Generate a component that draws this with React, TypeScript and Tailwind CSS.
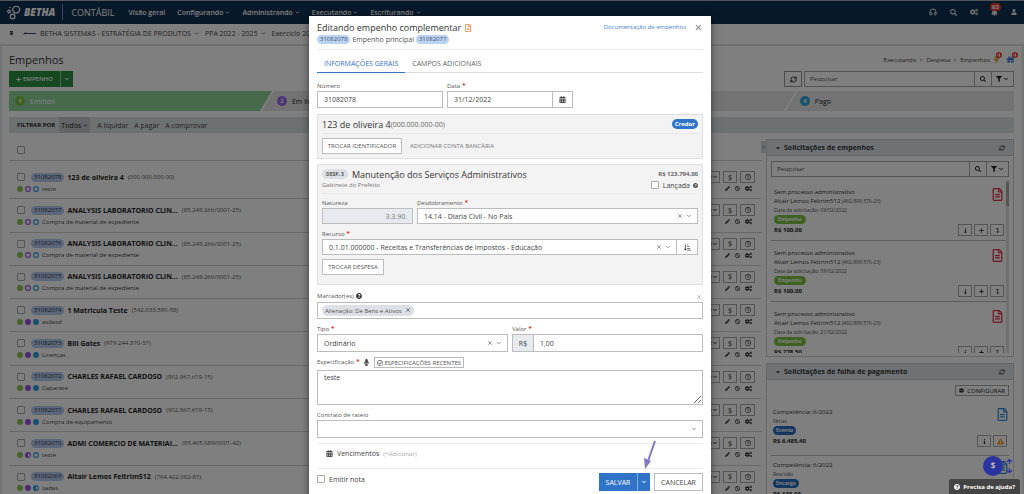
import React from 'react';
import {
  FaBan,
  FaBell,
  FaCalendarAlt,
  FaCog,
  FaCogs,
  FaExclamationTriangle,
  FaFilter,
  FaGift,
  FaInfo,
  FaLevelDownAlt,
  FaLightbulb,
  FaMicrophone,
  FaPencilAlt,
  FaPlus,
  FaQuestionCircle,
  FaRegCheckCircle,
  FaRegClock,
  FaRegFileAlt,
  FaSearch,
  FaSortAmountDownAlt,
  FaCaretDown,
  FaThumbtack,
  FaUser,
} from 'react-icons/fa';
import { ArrowDown, ArrowUp, ChevronDown, ChevronRight, Headphones, RefreshCw, X } from 'lucide-react';

type Fill = 'full' | 'half' | 'empty';

interface Empenho {
  id: string;
  name: string;
  doc: string;
  description: string;
  status: [Fill, Fill, Fill];
}

const empenhos: Empenho[] = [
  { id: '31082078', name: '123 de oliveira 4', doc: '(000.000.000-00)', description: 'teste', status: ['full', 'empty', 'empty'] },
  { id: '31082077', name: 'ANALYSIS LABORATORIO CLIN...', doc: '(85.249.266/0001-25)', description: 'Compra de material de expediente', status: ['full', 'empty', 'empty'] },
  { id: '31082076', name: 'ANALYSIS LABORATORIO CLIN...', doc: '(85.249.266/0001-25)', description: 'Compra de material de expediente', status: ['full', 'empty', 'empty'] },
  { id: '31082075', name: 'ANALYSIS LABORATORIO CLIN...', doc: '(85.249.266/0001-25)', description: 'Compra de material de expediente', status: ['full', 'empty', 'empty'] },
  { id: '31082074', name: '1 Matricula Teste', doc: '(542.033.590-58)', description: 'asdasd', status: ['full', 'full', 'full'] },
  { id: '31082073', name: 'Bill Gates', doc: '(979.244.370-37)', description: 'Licenças', status: ['full', 'full', 'full'] },
  { id: '31082072', name: 'CHARLES RAFAEL CARDOSO', doc: '(902.967.619-15)', description: 'Capacete', status: ['full', 'full', 'full'] },
  { id: '31082071', name: 'CHARLES RAFAEL CARDOSO', doc: '(902.967.619-15)', description: 'Compra de equipamento', status: ['full', 'full', 'full'] },
  { id: '31082070', name: 'ADMI COMERCIO DE MATERIAI...', doc: '(93.465.089/0001-42)', description: 'teste', status: ['full', 'half', 'empty'] },
  { id: '31082069', name: 'Altair Lemos Feltrim512', doc: '(764.422.082-81)', description: 'sadas', status: ['full', 'full', 'half'] },
];

const solicitacoes = [
  { date: '09/02/2022', value: 'R$ 100,00' },
  { date: '09/02/2022', value: 'R$ 100,00' },
  { date: '21/02/2022', value: 'R$ 278,50' },
];

const folhas = [
  { kind: 'Férias', tag: 'Evento', value: 'R$ 6.485,40' },
  { kind: 'Rescisão', tag: 'Encargo', value: 'R$ 136,66' },
];

const statusColors = ['text-[#8cc653]', 'text-[#9b51e0]', 'text-[#2d9cdb]'];

const StatusDot: React.FC<{ fill: Fill; color: string }> = ({ fill, color }) => (
  <svg viewBox="0 0 12 12" className={`size-[6px] ${color}`}>
    <circle cx="6" cy="6" r="4.8" fill={fill === 'full' ? 'currentColor' : 'none'} stroke="currentColor" strokeWidth="2.2" />
    {fill === 'half' && <path d="M6 1a5 5 0 0 0 0 10z" fill="currentColor" />}
  </svg>
);

const Check: React.FC<{ label?: string; id: string }> = ({ label, id }) => (
  <input
    type="checkbox"
    id={id}
    aria-label={label}
    className="size-2 shrink-0 appearance-none rounded-[1px] border border-[#aaa] bg-white"
  />
);

const Logo: React.FC = () => (
  <svg viewBox="0 0 42 44" className="h-[15px] w-[14px]" fill="none" stroke="#fff" strokeWidth="3.6">
    <path d="M22 4h11l6 9-6 10H22l-6-10z" strokeLinejoin="round" />
    <circle cx="6" cy="19" r="4" />
    <circle cx="9" cy="7" r="1.4" strokeWidth="2.4" />
    <circle cx="17" cy="34" r="7" />
  </svg>
);

const TopBar: React.FC = () => {
  const menus = ['Configurando', 'Administrando', 'Executando', 'Escriturando'];

  return (
    <header className="flex h-6 items-center border-t border-white/60 bg-[#0f3052] px-[7px] pb-px text-white">
      <Logo />
      <span className="ml-[3px] text-[10px] font-extrabold italic">BETHA</span>
      <span className="ml-[7px] h-4 w-px bg-[#8d78d8]" />
      <span className="ml-2 text-[9px]">CONTÁBIL</span>
      <nav className="ml-[14px] flex items-center gap-3 text-[7px] font-semibold">
        <a href="#visao">Visão geral</a>
        {menus.map((menu) => (
          <a key={menu} href={`#${menu}`} className="flex items-center gap-[2px]">
            {menu}
            <ChevronDown size={5} strokeWidth={4} />
          </a>
        ))}
      </nav>
      <div className="ml-auto flex items-center gap-[13px] text-[#e6e6e6]">
        <button aria-label="Suporte"><Headphones size={8} strokeWidth={3} /></button>
        <button aria-label="Buscar"><FaSearch size={7} /></button>
        <button aria-label="Configurações"><FaCogs size={8} /></button>
        <button aria-label="Notificações" className="relative">
          <FaBell size={7} />
          <span className="absolute -top-[6px] -left-px rounded-full bg-[#e23b34] px-[2px] text-[6px] leading-[8px] font-bold text-white">63</span>
        </button>
        <button aria-label="Usuário"><FaUser size={6} /></button>
      </div>
    </header>
  );
};

const ContextBar: React.FC = () => (
  <div className="flex h-[22px] items-center border-b-2 border-[#dcdfe1] bg-white px-[9px] pb-px text-[7px] text-[#444]">
    <FaThumbtack size={5} />
    <svg viewBox="0 0 40 8" className="mr-[4px] ml-[9px] h-[3px] w-[13px]">
      <path d="M0 6L6 1H12L8 6Z" fill="#444" />
      <path d="M10 4H40" stroke="#2c3c7c" strokeWidth="3" />
    </svg>
    <button className="flex items-center gap-[3px]">BETHA SISTEMAS - ESTRATÉGIA DE PRODUTOS <ChevronDown size={5} strokeWidth={3} /></button>
    <button className="ml-[6px] flex items-center gap-[3px]">PPA 2022 - 2025 <ChevronDown size={5} strokeWidth={3} /></button>
    <button className="ml-[6px] flex items-center gap-[3px]">Exercício 2022 <ChevronDown size={5} strokeWidth={3} /></button>
  </div>
);

const SearchBox: React.FC<{ id: string; className: string }> = ({ id, className }) => (
  <div className={`flex h-4 border border-[#aaa] bg-white text-[#222] ${className}`}>
    <input id={id} aria-label="Pesquisar" placeholder="Pesquisar" className="min-w-0 flex-1 px-[5px] text-[6px] placeholder:text-[#555]" />
    <button aria-label="Buscar" className="flex w-[17px] items-center justify-center border-l border-[#aaa]"><FaSearch size={6} /></button>
    <button aria-label="Filtrar" className="flex w-[22px] items-center justify-center gap-px border-l border-[#aaa]">
      <FaFilter size={6} />
      <ChevronDown size={6} strokeWidth={4} />
    </button>
  </div>
);

const stageClip = '[clip-path:polygon(12px_0,100%_0,calc(100%-12px)_100%,0_100%)]';

const stages = [
  { n: 1, label: 'Emitido', box: 'grow-6 bg-[#8fd49a] pl-[6px] text-white [clip-path:polygon(0_0,100%_0,calc(100%-12px)_100%,0_100%)]', dot: 'bg-[#7cc142]' },
  { n: 2, label: 'Em liquidação', box: `-ml-[10px] grow-6 bg-[#e6e6e6] pl-[15px] ${stageClip}`, dot: 'bg-[#9b6be8]' },
  { n: 3, label: 'Liquidado', box: `-ml-[10px] grow-6 bg-[#e6e6e6] pl-[15px] ${stageClip}`, dot: 'bg-[#e8a33b]' },
  { n: 4, label: 'Pago', box: '-ml-[10px] grow-5 bg-[#e6e6e6] pl-[14px] [clip-path:polygon(12px_0,100%_0,100%_100%,0_100%)]', dot: 'bg-[#2fa4dc]' },
];

const PageHeader: React.FC = () => (
  <>
    <div className="flex h-[25px] items-center justify-between pt-[2px]">
      <h1 className="text-[11px] text-[#333]">Empenhos</h1>
      <div className="flex items-center gap-[3px] text-[6px] text-[#444]">
        <span>Executando</span>
        <ChevronRight size={4} strokeWidth={4} />
        <span>Despesa</span>
        <ChevronRight size={4} strokeWidth={4} />
        <span>Empenhos</span>
        <span className="relative text-[#e5a93a]">
          <FaLightbulb size={7} />
          <span className="absolute -top-1 left-[3px] size-[6px] rounded-full bg-[#e23b34] text-center text-[5px] leading-[6px] font-bold text-white">4</span>
        </span>
        <span className="relative ml-1 text-[#2a6fd0]">
          <FaGift size={7} />
          <span className="absolute -top-1 left-[5px] size-[6px] rounded-full bg-[#e23b34] text-center text-[5px] leading-[6px] font-bold text-white">4</span>
        </span>
      </div>
    </div>
    <div className="flex items-center justify-between">
      <div className="flex h-4 bg-[#2c9145] text-[6px] font-semibold text-white">
        <button className="flex items-center gap-[2px] px-[7px]"><FaPlus size={5} /> EMPENHO</button>
        <button aria-label="Mais opções" className="flex w-[13px] items-center justify-center border-l border-white/50"><ChevronDown size={6} strokeWidth={4} /></button>
      </div>
      <div className="flex gap-[2px]">
        <button aria-label="Atualizar" className="flex h-4 w-[18px] items-center justify-center border border-[#999] text-[#222]"><RefreshCw size={7} strokeWidth={3} /></button>
        <SearchBox id="busca" className="w-[210px]" />
      </div>
    </div>
    <ol className="mt-1 flex h-5 text-[7px] text-[#222]">
      {stages.map((stage) => (
        <li key={stage.n} className={`flex basis-0 items-center gap-[5px] ${stage.box}`}>
          <span className={`size-[10px] rounded-full text-center text-[6px] leading-[10px] font-bold text-white ${stage.dot}`}>{stage.n}</span>
          {stage.label}
        </li>
      ))}
    </ol>
    <div className="mt-[6px] flex h-4 items-center bg-[#dde2e5] pl-2 text-[7px] text-[#444]">
      <span className="text-[6px] font-bold text-[#222]">FILTRAR POR</span>
      <button className="ml-1 flex h-4 items-center gap-[2px] bg-[#c4c9cc] px-[2px] text-[#222]">Todos <ChevronDown size={5} strokeWidth={4} /></button>
      <a href="#liquidar" className="ml-[7px]">A liquidar</a>
      <a href="#pagar" className="ml-[6px]">A pagar</a>
      <a href="#comprovar" className="ml-[6px]">A comprovar</a>
    </div>
  </>
);

const rowButton = 'flex h-3 items-center justify-center border border-[#aaa]';

const EmpenhoRow: React.FC<{ item: Empenho }> = ({ item }) => (
  <li className="flex items-start justify-between border-b border-[#d0d0d0] pt-[5px] pr-[6px] pl-2">
    <div>
      <div className="flex h-3 items-center">
        <Check id={`row-${item.id}`} label={item.id} />
        <span className="ml-[6px] rounded-full bg-[#b7cdf1] px-[3px] text-[6px] leading-[9px] text-[#335]">{item.id}</span>
        <strong className="ml-[3px] text-[7px] font-bold text-[#222]">{item.name}</strong>
        <span className="ml-[4px] text-[6px] text-[#555]">{item.doc}</span>
      </div>
      <div className="flex h-[11px] items-center gap-[2px]">
        {item.status.map((fill, i) => (
          <StatusDot key={i} fill={fill} color={statusColors[i]} />
        ))}
        <span className="ml-px text-[6px] text-[#444]">{item.description}</span>
      </div>
    </div>
    <div className="flex flex-col items-end text-[#333]">
      <div className="flex gap-[3px] text-[7px]">
        <button className="flex h-3 items-center border border-[#aaa] px-px text-[6px]">LIQUIDAR <ChevronDown size={6} strokeWidth={4} /></button>
        <button className={`w-[14px] ${rowButton}`}>$</button>
        <button aria-label="Histórico" className={`w-[15px] ${rowButton}`}><FaRegClock size={6} /></button>
      </div>
      <div className="flex h-[11px] items-center gap-[5px] pr-[3px]">
        <button aria-label="Editar"><FaPencilAlt size={5} /></button>
        <button aria-label="Anular"><FaBan size={5} /></button>
        <button aria-label="Opções"><FaCogs size={7} /></button>
      </div>
    </div>
  </li>
);

const miniButton = 'flex h-3 w-[14px] items-center justify-center border border-[#aaa] text-[#333]';

const SidePanel: React.FC<{ title: string; children: React.ReactNode; className: string }> = ({ title, children, className }) => (
  <section className={`border border-[#ccc] bg-white ${className}`}>
    <div className="flex h-4 items-center border-b border-[#ccc] bg-[#dfe4ea] px-2">
      <FaCaretDown size={6} className="text-[#333]" />
      <h2 className="ml-[3px] text-[7px] font-bold text-[#333]">{title}</h2>
      <button aria-label="Atualizar" className="ml-auto text-[#333]"><RefreshCw size={6} strokeWidth={3} /></button>
    </div>
    {children}
  </section>
);

const Sidebar: React.FC = () => (
  <aside className="flex w-[248px] shrink-0 flex-col gap-[6px]">
    <SidePanel title="Solicitações de empenhos" className="h-[218px] overflow-hidden">
      <SearchBox id="busca-solicitacao" className="mx-1 mt-[5px]" />
      <div className="mt-[3px] flex h-[173px] overflow-hidden pl-1">
        <ul className="flex-1">
          {solicitacoes.map((s, i) => (
            <li key={i} className="h-[61px] border-b border-[#bbb] pt-2 pr-[2px] pl-[3px] text-[6px] leading-[9px] text-[#333]">
              <div className="flex items-start justify-between">
                <div>
                  <p>Sem processo administrativo</p>
                  <p>Altair Lemos Feltrim512 <span className="text-[5px] text-[#555]">(462.899.570-23)</span></p>
                  <p className="text-[5px] text-[#555]">Data da solicitação: {s.date}</p>
                </div>
                <FaRegFileAlt size={13} className="text-[#d8324a]" />
              </div>
              <span className="block w-fit rounded-full bg-[#7cc142] px-[4px] text-[5px] leading-[9px] font-bold text-white">Empenho</span>
              <div className="flex items-center justify-between">
                <strong className="text-[#222]">{s.value}</strong>
                <div className="flex gap-[2px]">
                  <button aria-label="Detalhes" className={miniButton}><FaInfo size={5} /></button>
                  <button aria-label="Adicionar" className={miniButton}><FaPlus size={5} /></button>
                  <button aria-label="Baixar" className={miniButton}><FaLevelDownAlt size={5} /></button>
                </div>
              </div>
            </li>
          ))}
        </ul>
        <div className="mr-1 w-[3px] bg-[#e0e0e0]"><div className="mt-[2px] h-6 bg-[#aaa]" /></div>
      </div>
    </SidePanel>
    <SidePanel title="Solicitações de folha de pagamento" className="flex-1">
      <div className="flex justify-end px-1 pt-[5px]">
        <button className="flex h-[11px] items-center gap-[3px] border border-[#aaa] px-[3px] text-[6px] text-[#222]"><FaCog size={5} /> CONFIGURAR</button>
      </div>
      <ul className="mx-1 mt-[7px]">
        {folhas.map((f) => (
          <li key={f.tag} className="h-[53px] border-b border-[#bbb] pt-[5px] pl-[2px] text-[6px] leading-[9px] text-[#333]">
            <div className="flex items-start justify-between">
              <div>
                <p>Competência: 6/2022</p>
                <p className="text-[5px] text-[#555]">{f.kind}</p>
              </div>
              <FaRegFileAlt size={13} className="text-[#2d8fd8]" />
            </div>
            <span className="block w-fit rounded-full bg-[#2a6fbf] px-[3px] text-[5px] leading-[9px] font-bold text-white">{f.tag}</span>
            <div className="flex items-center justify-between pr-[2px]">
              <strong className="text-[#222]">{f.value}</strong>
              <div className="flex gap-[2px]">
                <button aria-label="Detalhes" className={miniButton}><FaInfo size={5} /></button>
                <button aria-label="Alertas" className={miniButton}><FaExclamationTriangle size={7} color="#f0a020" /></button>
              </div>
            </div>
          </li>
        ))}
      </ul>
    </SidePanel>
  </aside>
);

const Label: React.FC<{ htmlFor: string; required?: boolean; children: React.ReactNode }> = ({ htmlFor, required, children }) => (
  <label htmlFor={htmlFor} className="flex h-[9px] gap-[2px] text-[6px] leading-[9px] font-medium text-[#555]">
    {children}
    {required && <span className="leading-[6px] font-bold text-[#e02020]">*</span>}
  </label>
);

const field = 'border border-[#bdbdbd] bg-white text-[7px] text-[#444]';

const SelectField: React.FC<{ id: string; value: string; clearable?: boolean; className: string }> = ({ id, value, clearable = true, className }) => (
  <div className={`flex items-center pr-[5px] ${field} ${className}`}>
    <select id={id} className="h-full min-w-0 flex-1 appearance-none px-[6px]" defaultValue={value}>
      <option>{value}</option>
    </select>
    {clearable && <button aria-label="Limpar" className="mr-[3px] text-[#777]"><X size={6} strokeWidth={3} /></button>}
    <ChevronDown size={6} strokeWidth={3} className="text-[#777]" />
  </div>
);

const outlineButton = 'h-4 border border-[#bdbdbd] bg-white text-[#555]';

const IdBadge: React.FC<{ children: string }> = ({ children }) => (
  <span className="rounded-full bg-[#bcd2f5] px-[3px] text-[6px] leading-[9px] text-[#456]">{children}</span>
);

const EditDialog: React.FC = () => (
  <div role="dialog" aria-label="Editando empenho complementar" className="relative w-full max-w-[402px] bg-white px-2 pt-[6px] pb-4 shadow-[0_2px_8px_rgba(0,0,0,0.5)]">
    <div className="flex items-start justify-between border-b border-[#ececec] pb-[5px]">
      <div>
        <h2 className="flex items-center gap-[3px] text-[9px] leading-[12px] text-[#333]">
          Editando empenho complementar
          <FaRegFileAlt size={8} className="text-[#f08a3c]" />
        </h2>
        <p className="flex h-[10px] items-center gap-[2px] text-[7px] text-[#555]">
          <IdBadge>31082078</IdBadge> Empenho principal <IdBadge>31082077</IdBadge>
        </p>
      </div>
      <div className="flex items-center gap-2 pt-[1px]">
        <a href="#documentacao" className="text-[6px] leading-[9px] text-[#3f80d0]">Documentação de empenhos</a>
        <button aria-label="Fechar" className="text-[#999]"><X size={9} strokeWidth={3} /></button>
      </div>
    </div>

    <div role="tablist" className="mt-1 flex h-[19px] border-b border-[#ddd] text-[7px]">
      <button role="tab" aria-selected="true" className="-mb-px border-b border-[#2f74c8] px-[7px] font-medium text-[#2f74c8]">INFORMAÇÕES GERAIS</button>
      <button role="tab" aria-selected="false" className="px-[7px] text-[#666]">CAMPOS ADICIONAIS</button>
    </div>

    <div className="mt-[9px] flex gap-1">
      <div className="w-[126px]">
        <Label htmlFor="numero">Número</Label>
        <input id="numero" defaultValue="31082078" className={`block h-[17px] w-full px-[6px] ${field}`} />
      </div>
      <div className="w-[126px]">
        <Label htmlFor="data" required>Data</Label>
        <div className="flex">
          <input id="data" defaultValue="31/12/2022" className={`h-[17px] min-w-0 flex-1 px-[6px] ${field}`} />
          <button aria-label="Abrir calendário" className="flex h-[17px] w-5 items-center justify-center border border-l-0 border-[#bdbdbd] text-[#444]"><FaCalendarAlt size={7} /></button>
        </div>
      </div>
    </div>

    <section className="mt-[6px] border border-[#e0e0e0] bg-[#f3f3f3] px-1 pb-1">
      <div className="flex h-[19px] items-center border-b border-[#e9e9e9]">
        <h3 className="text-[9px] text-[#333]">123 de oliveira 4</h3>
        <span className="text-[7px] text-[#666]">(000.000.000-00)</span>
        <span className="ml-auto rounded-full bg-[#2f74c8] px-[3px] text-[6px] leading-[10px] font-bold text-white">Credor</span>
      </div>
      <div className="mt-1 flex items-center text-[6px]">
        <button className={`w-20 ${outlineButton}`}>TROCAR IDENTIFICADOR</button>
        <button className="ml-[8px] text-[#777]">ADICIONAR CONTA BANCÁRIA</button>
      </div>
    </section>

    <section className="mt-[5px] border border-[#e0e0e0] bg-[#f3f3f3] px-1 pt-[3px] pb-[9px]">
      <div className="flex justify-between border-b border-[#e9e9e9] pb-[3px]">
        <div>
          <h3 className="flex h-3 items-center gap-1 text-[9px] text-[#333]">
            <span className="rounded-full bg-[#dcdfe3] px-[4px] text-[5px] leading-[10px] font-bold text-[#555]">DESP. 3</span>
            Manutenção dos Serviços Administrativos
          </h3>
          <p className="text-[6px] leading-[10px] text-[#777]">Gabinete do Prefeito</p>
        </div>
        <div className="flex flex-col items-end">
          <strong className="text-[6px] leading-[12px] font-bold text-[#666]">R$ 123.794,00</strong>
          <div className="flex h-[10px] items-center text-[7px] text-[#444]">
            <Check id="lancada" />
            <label htmlFor="lancada" className="mr-[3px] ml-[4px]">Lançada</label>
            <FaQuestionCircle size={5} />
          </div>
        </div>
      </div>
      <div className="mt-[5px] flex gap-1">
        <div className="w-[91px]">
          <Label htmlFor="natureza">Natureza</Label>
          <input id="natureza" defaultValue="3.3.90." disabled className="block h-4 w-full border border-[#bdbdbd] bg-[#e7eaee] px-[5px] text-right text-[7px] text-[#777]" />
        </div>
        <div className="flex-1">
          <Label htmlFor="desdobramento" required>Desdobramento</Label>
          <SelectField id="desdobramento" value="14.14 - Díaria Civil - No País" className="h-4" />
        </div>
      </div>
      <div className="mt-[6px]">
        <Label htmlFor="recurso" required>Recurso</Label>
        <div className="flex">
          <SelectField id="recurso" value="0.1.01.000000 - Receitas e Transferências de Impostos - Educação" className="h-4 flex-1" />
          <button aria-label="Ordenar" className="flex h-4 w-[21px] items-center justify-center border border-l-0 border-[#bdbdbd] bg-white text-[#444]"><FaSortAmountDownAlt size={7} /></button>
        </div>
      </div>
      <button className={`mt-1 block w-[62px] text-[6px] ${outlineButton}`}>TROCAR DESPESA</button>
    </section>

    <div className="mt-[7px]">
      <div className="flex items-center justify-between pr-px">
        <Label htmlFor="marcadores">Marcador(es) <FaQuestionCircle size={6} className="mt-px text-[#333]" /></Label>
        <button aria-label="Limpar marcadores" className="text-[#aaa]"><X size={6} strokeWidth={3} /></button>
      </div>
      <div className={`mt-px flex h-[17px] items-center px-1 ${field}`}>
        <span className="flex h-[11px] items-center gap-[3px] rounded-full bg-[#dde0e4] px-[3px] text-[6px] text-[#555]">
          Alienação: De Bens e Ativos
          <button aria-label="Remover marcador" className="-mt-[2px]"><X size={6} strokeWidth={3} /></button>
        </span>
        <input id="marcadores" className="min-w-0 flex-1" />
      </div>
    </div>

    <div className="mt-[6px] flex gap-1">
      <div className="flex-1">
        <Label htmlFor="tipo" required>Tipo</Label>
        <SelectField id="tipo" value="Ordinário" className="h-[18px]" />
      </div>
      <div className="flex-1">
        <Label htmlFor="valor" required>Valor</Label>
        <div className="flex">
          <span className="flex h-[18px] w-[21px] items-center justify-center border border-r-0 border-[#bdbdbd] bg-[#e7eaee] text-[7px] text-[#444]">R$</span>
          <input id="valor" defaultValue="1,00" className={`h-[18px] min-w-0 flex-1 px-[6px] ${field}`} />
        </div>
      </div>
    </div>

    <div className="mt-[5px] flex h-[11px] items-center gap-1 text-[#444]">
      <Label htmlFor="especificacao" required>Especificação</Label>
      <button aria-label="Ditar"><FaMicrophone size={7} /></button>
      <button className="flex h-[11px] items-center gap-px border border-[#bbb] px-[2px] text-[6px] text-[#555]"><FaRegCheckCircle size={6} /> ESPECIFICAÇÕES RECENTES</button>
    </div>
    <textarea id="especificacao" defaultValue="teste" className={`mt-[2px] block h-[35px] w-full px-[6px] py-[3px] ${field}`} />

    <div className="mt-[6px]">
      <Label htmlFor="rateio">Contrato de rateio</Label>
      <SelectField id="rateio" value="" clearable={false} className="h-[18px]" />
    </div>

    <div className="mt-[5px] flex h-[26px] items-center border-y border-[#ececec] pb-[5px] pl-[9px] text-[#444]">
      <FaCalendarAlt size={7} />
      <span className="ml-1 text-[7px]">Vencimentos</span>
      <button className="ml-1 text-[6px] text-[#aaa]">(+Adicionar)</button>
    </div>

    <div className="mt-1 flex items-start justify-between text-[7px]">
      <div className="flex h-3 items-center gap-1 text-[#444]">
        <Check id="emitir" />
        <label htmlFor="emitir">Emitir nota</label>
      </div>
      <div className="flex">
        <button className="h-[18px] w-[38px] bg-[#2f74c8] text-white">SALVAR</button>
        <button aria-label="Mais opções de salvar" className="flex h-[18px] w-[13px] items-center justify-center border-l border-[#7fabdf] bg-[#2f74c8] text-white"><ChevronDown size={6} strokeWidth={4} /></button>
        <button className="ml-1 h-[18px] w-[49px] border border-[#bdbdbd] text-[#444]">CANCELAR</button>
      </div>
    </div>

    {/* pointer to the save options */}
    <svg viewBox="0 0 12 30" className="absolute right-[55px] bottom-[37px] h-[30px] w-3">
      <path d="M11 1L4 21" stroke="#8478c4" strokeWidth="2" fill="none" />
      <path d="M1 29L0 18L7 21Z" fill="#8478c4" />
    </svg>
  </div>
);

export default function App() {
  return (
    <div className="relative h-screen overflow-hidden bg-[#e4e7e9] font-['Open_Sans','Noto_Sans',sans-serif] leading-none">
      <TopBar />
      <ContextBar />
      <main className="mr-[2px] ml-[2px] bg-white pr-2 pl-[7px]">
        <PageHeader />
        <div className="mt-[6px] flex">
          <div className="min-w-0 flex-1">
            <div className="flex h-[22px] items-center border-b border-[#d0d0d0] pl-2">
              <Check id="todos" label="Selecionar todos" />
            </div>
            <ul className="grid h-[338px] auto-rows-fr pt-[5px]">
              {empenhos.map((item) => (
                <EmpenhoRow key={item.id} item={item} />
              ))}
            </ul>
          </div>
          <button aria-label="Recolher painel" className="mt-[2px] flex h-3 w-[5px] items-center justify-center bg-[#d5dade] text-[#444]"><ChevronRight size={5} strokeWidth={3} /></button>
          <Sidebar />
        </div>
      </main>

      <div className="absolute inset-0 flex items-start justify-center overflow-hidden bg-black/50 pt-4 pr-1">
        <EditDialog />
      </div>

      <div className="absolute right-[11px] bottom-[18px] flex items-center gap-[3px] text-[#2a34a0]">
        <button aria-label="Financeiro" className="size-5 rounded-full bg-[#2a34a0] text-[8px] font-bold text-[#bbb]">$</button>
        <span className="flex flex-col gap-[2px]">
          <ArrowUp size={7} strokeWidth={4} />
          <ArrowDown size={7} strokeWidth={4} />
        </span>
      </div>

      <button className="absolute right-1 bottom-0 flex h-[15px] items-center gap-[3px] rounded-t-[2px] bg-[#444] px-[5px] text-[6px] font-bold text-white">
        <FaQuestionCircle size={6} /> Precisa de ajuda?
      </button>
    </div>
  );
}
